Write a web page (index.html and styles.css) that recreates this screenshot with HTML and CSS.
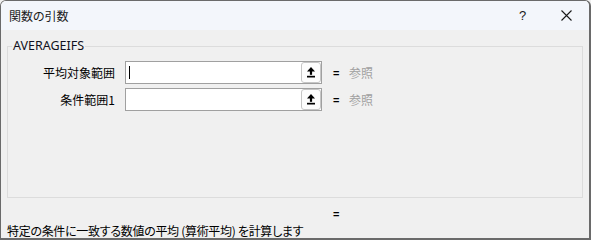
FILE: index.html
```html
<!DOCTYPE html>
<html lang="ja">
<head>
<meta charset="utf-8">
<link rel="stylesheet" href="styles.css">
</head>
<body>
<div class="window">
  <div class="titlebar">
    <span class="title">関数の引数</span>
    <span class="help">?</span>
    <span class="close">
      <svg width="11" height="11" viewBox="0 0 11 11"><path d="M0.5 0.5 L10.5 10.5 M10.5 0.5 L0.5 10.5" stroke="#1a1a1a" stroke-width="1.1" fill="none"/></svg>
    </span>
  </div>
  <div class="content">
    <fieldset class="group">
      <legend class="legend">AVERAGEIFS</legend>
      <div class="row">
        <span class="label">平均対象範囲</span>
        <div class="input"><span class="caret"></span>
          <span class="refbtn"><svg width="8" height="11" viewBox="0 0 8 11"><path d="M4 0 L0 4.4 L8 4.4 Z" fill="#000"/><rect x="2.9" y="4" width="2.2" height="3.8" fill="#000"/><rect x="0" y="8.8" width="8" height="1.7" fill="#000"/></svg></span>
        </div>
        <span class="eq">=</span>
        <span class="val">参照</span>
      </div>
      <div class="row">
        <span class="label">条件範囲1</span>
        <div class="input">
          <span class="refbtn"><svg width="8" height="11" viewBox="0 0 8 11"><path d="M4 0 L0 4.4 L8 4.4 Z" fill="#000"/><rect x="2.9" y="4" width="2.2" height="3.8" fill="#000"/><rect x="0" y="8.8" width="8" height="1.7" fill="#000"/></svg></span>
        </div>
        <span class="eq">=</span>
        <span class="val">参照</span>
      </div>
    </fieldset>
    <div class="result">=</div>
    <div class="desc">特定の条件に一致する数値の平均 (算術平均) を計算します</div>
  </div>
</div>
</body>
</html>
```
FILE: styles.css
```css
html, body {
  margin: 0;
  padding: 0;
  background: #f0f0f0;
}
body {
  font-family: "Noto Sans CJK JP", "Noto Sans", sans-serif;
  font-size: 12px;
  color: #000;
  font-feature-settings: "palt";
}
.window {
  box-sizing: border-box;
  width: 591px;
  height: 240px;
  border: 1px solid #6a6a6a;
  border-right-width: 2px;
  border-bottom-width: 2px;
  border-top-left-radius: 6px;
  border-top-right-radius: 6px;
  background: #f0f0f0;
  overflow: hidden;
  display: flex;
  flex-direction: column;
}
.titlebar {
  height: 29px;
  flex: none;
  background: #f3f6fb;
  display: flex;
  align-items: center;
  padding-left: 8px;
  color: #1a1a1a;
}
.title {
  font-size: 12px;
  line-height: 16px;
  flex: 1;
}
.help {
  font-family: "Liberation Sans", sans-serif;
  font-size: 13px;
  width: 14px;
  margin-right: 28px;
  line-height: 16px;
}
.close {
  width: 11px;
  height: 11px;
  margin-right: 17px;
  display: flex;
}
.content {
  flex: 1;
  display: flex;
  flex-direction: column;
}
.group {
  box-sizing: border-box;
  margin: 8px 6px 0 6px;
  padding: 7px 0 0 0;
  height: 160px;
  border: 1px solid #dcdcdc;
  display: flex;
  flex-direction: column;
  gap: 4px;
}
.legend {
  padding: 0 1px;
  margin-left: 4px;
  font-family: "Noto Sans", sans-serif;
  font-size: 12.5px;
  line-height: 16px;
  color: #101020;
}
.row {
  display: grid;
  grid-template-columns: 107px 197px 8px auto;
  column-gap: 10px;
  align-items: center;
  height: 23px;
}
.label {
  text-align: right;
  line-height: 16px;
}
.input {
  box-sizing: border-box;
  height: 23px;
  background: #fff;
  border: 1px solid #a0a0a0;
  display: flex;
  align-items: center;
  justify-content: space-between;
  padding: 0 0 0 3px;
}
.caret {
  width: 1px;
  height: 13px;
  background: #000;
}
.refbtn {
  box-sizing: border-box;
  margin-left: auto;
  width: 20px;
  height: 21px;
  border: 1px solid #c6c6c6;
  border-radius: 3px;
  background: #fdfdfd;
  display: flex;
  align-items: center;
  justify-content: center;
}
.eq {
  font-family: "Liberation Sans", sans-serif;
  font-weight: bold;
  font-size: 11px;
  text-align: left;
  margin-left: 1px;
  color: #000;
}
.val {
  color: #a0a0a0;
  margin-left: -1px;
}
.result {
  margin-top: 10px;
  padding-left: 332px;
  font-family: "Liberation Sans", sans-serif;
  font-weight: bold;
  font-size: 11px;
  line-height: 12px;
}
.desc {
  margin-top: 3px;
  padding-left: 6px;
  line-height: 16px;
  letter-spacing: -0.3px;
}
```
